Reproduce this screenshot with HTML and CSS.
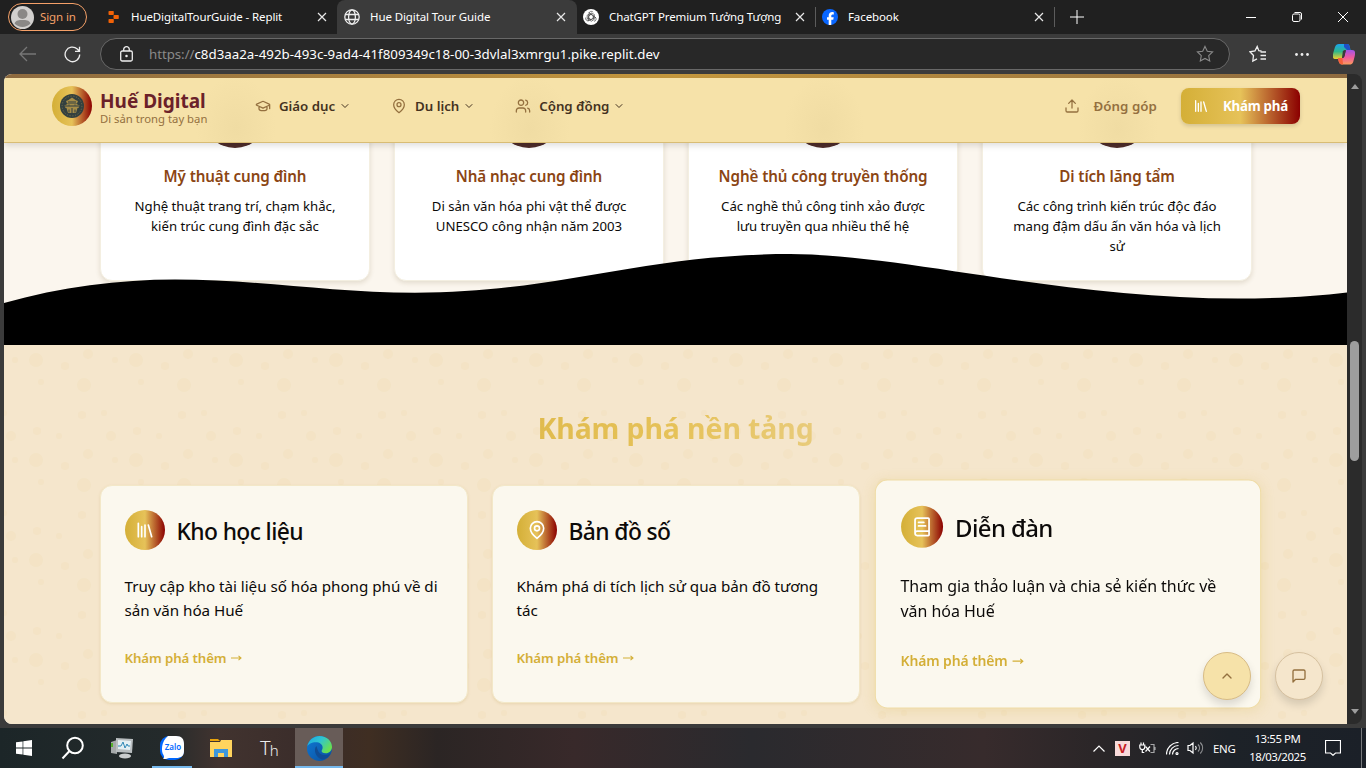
FILE: index.html
```html
<!DOCTYPE html>
<html lang="vi">
<head>
<meta charset="utf-8">
<title>Hue Digital Tour Guide</title>
<link rel="stylesheet" href="styles.css">
</head>
<body>
<svg class="defs" aria-hidden="true">
  <defs>
    <symbol id="x" viewBox="0 0 10 10"><path d="M1 1l8 8M9 1l-8 8"/></symbol>
    <symbol id="chev" viewBox="0 0 24 24"><path d="m6 9 6 6 6-6"/></symbol>
    <symbol id="lib" viewBox="0 0 24 24"><path d="m16 6 4 14M12 6v14M8 8v12M4 4v16"/></symbol>
    <symbol id="pin" viewBox="0 0 24 24"><path d="M20 10c0 6-8 12-8 12s-8-6-8-12a8 8 0 0 1 16 0Z"/><circle cx="12" cy="10" r="3"/></symbol>
    <symbol id="star" viewBox="0 0 18 18"><path d="m9 1.4 2.3 4.9 5.3.7-3.9 3.7 1 5.3L9 13.4 4.300 16l1-5.300L1.400 7l5.300-.7Z"/></symbol>
    <linearGradient id="edgeA" x1="0" y1="0" x2="1" y2="1"><stop offset="0" stop-color="#0f78d4"/><stop offset="1" stop-color="#0a4f9e"/></linearGradient>
    <linearGradient id="edgeB" x1="0" y1="0" x2="1" y2=".6"><stop offset="0" stop-color="#1ba7e0"/><stop offset=".5" stop-color="#2fc4d2"/><stop offset="1" stop-color="#6ae04f"/></linearGradient>
    <linearGradient id="copA" x1="0" y1="0" x2="0" y2="1"><stop offset="0" stop-color="#1ba4f0"/><stop offset=".5" stop-color="#2fb78a"/><stop offset="1" stop-color="#f2cf2c"/></linearGradient>
    <linearGradient id="copB" x1="0" y1="0" x2="0" y2="1"><stop offset="0" stop-color="#a155e8"/><stop offset=".5" stop-color="#ef5aa0"/><stop offset="1" stop-color="#fb9a5a"/></linearGradient>
  </defs>
</svg>
<div class="screen">
  <div class="tabs">
    <div class="signin"><svg width="23" height="23" viewBox="0 0 23 23"><circle cx="11.500" cy="11.500" r="11.500" fill="#d2d0ce"/><circle cx="11.500" cy="8" r="5" fill="#8a8886"/><path d="M3.500 17.500C5 14 8 14 11.500 14s6.500 0 8 3.500a11 11 0 0 1-16 0Z" fill="#8a8886"/></svg><span>Sign in</span></div>
    <div class="tab tab-1"><svg class="fav" viewBox="0 0 16 16" fill="#f26207"><rect x="2.500" y="2" width="5.300" height="4" rx=".8"/><rect x="7.500" y="6" width="5.300" height="4" rx=".8"/><rect x="2.500" y="10" width="5.300" height="4" rx=".8"/></svg><span>HueDigitalTourGuide - Replit</span><svg class="close"><use href="#x"/></svg></div>
    <div class="tab tab-2"><svg class="fav" viewBox="0 0 16 16" fill="none" stroke="#eee" stroke-width="1.300"><circle cx="8" cy="8" r="7.200"/><ellipse cx="8" cy="8" rx="3.400" ry="7.200"/><path d="M1.500 5.500h13M1.500 10.500h13"/></svg><span>Hue Digital Tour Guide</span><svg class="close"><use href="#x"/></svg></div>
    <div class="tab tab-3"><svg class="fav" viewBox="0 0 16 16" fill="none" stroke="#444" stroke-width=".65"><circle cx="8" cy="8" r="8" fill="#fff" stroke="none"/><g id="knot"><path d="M6 7V4.500a2.300 2.300 0 0 1 4.200-1.200M6 9.500l2 1.200 3.400-2V5.500L8 3.800"/><path d="M8 5.300 10.300 6.700V10L13 8.200"/></g><use href="#knot" transform="rotate(120 8 8)"/><use href="#knot" transform="rotate(240 8 8)"/></svg><span>ChatGPT Premium Tưởng Tượng</span><svg class="close"><use href="#x"/></svg></div>
    <div class="tab tab-4"><svg class="fav" viewBox="0 0 16 16"><circle cx="8" cy="8" r="8" fill="#0866ff"/><path d="M6.700 16v-5.300H5V8.200h1.700V7c0-2.700 1.200-3.900 3.800-3.900l1.300.1v2.300h-.8C9.700 5.500 9.300 6 9.300 7v1.200h2.400l-.4 2.500h-2V16Z" fill="#fff"/></svg><span>Facebook</span><svg class="close"><use href="#x"/></svg></div>
    <svg class="plus" viewBox="0 0 14 14"><path d="M7 0v14M0 7h14"/></svg>
    <div class="win">
      <svg width="10" height="10"><path d="M0 5.500h10"/></svg>
      <svg width="10" height="10" viewBox="0 0 10 10"><rect x=".5" y="2" width="7.500" height="7.500" rx="1.500"/><path d="M2.500.5H8A1.500 1.500 0 0 1 9.500 2v5.500"/></svg>
      <svg width="10" height="10"><path d="M0 0l10 10M10 0L0 10"/></svg>
    </div>
  </div>
  <div class="toolbar">
    <svg class="back" viewBox="0 0 17 16"><path d="M8 1 1 8l7 7M1 8h16"/></svg>
    <svg class="reload" viewBox="0 0 17 17"><path d="M15.700 8.500A7.300 7.300 0 1 1 13.300 3L15.200 5M15.500.8V5.300H11"/></svg>
    <div class="omni">
      <svg class="lock" viewBox="0 0 13 16"><rect x=".7" y="5" width="11.600" height="10" rx="1.500"/><path d="M3.700 5V3.500a2.800 2.800 0 0 1 5.600 0V5"/><circle cx="6.500" cy="10" r=".6" fill="#eee"/></svg>
      <span class="url"><i>https://</i>c8d3aa2a-492b-493c-9ad4-41f809349c18-00-3dvlal3xmrgu1.pike.replit.dev</span>
      <svg class="star" viewBox="0 0 18 18"><use href="#star"/></svg>
    </div>
    <svg class="favs" viewBox="0 0 18 18"><path d="M12.500 6 9.800 5.700 8.200 1.500 6 5.900 1 6.800l3.500 3.700L3.800 16 8 13.800M11.500 7H17M11.500 10.500H17M11.500 14H17"/></svg>
    <svg class="dots" viewBox="0 0 14 3"><circle cx="1.500" cy="1.500" r="1.400"/><circle cx="7" cy="1.500" r="1.400"/><circle cx="12.500" cy="1.500" r="1.400"/></svg>
    <svg class="copilot" viewBox="0 0 22 21"><path d="M10 0h4c2 0 2.500 1.500 3 4l.5 2H14c-2 0-3 1-3.500 3L9 15H3c-4 0-3.500-3-2.500-7L2 3C2.700 1 4 0 6 0Z" fill="url(#copA)"/><path d="M11 0h3c2 0 2.500 1.500 3 4l.5 2H14l-3-3Z" fill="#1f50c8"/><path d="M13 6h6c3.500 0 3.500 3 2.500 7l-1.300 5c-.7 2-2 2.500-4 2.500H9c-2 0-3-1.500-3.500-4L5 14h4c2 0 2.500-1.500 3-4Z" fill="url(#copB)"/><path d="M5 14h4.500l.5 6.400H9C6.500 20.400 5.500 18 5 14Z" fill="#f5603a"/><path d="M9.800 7.500c.6-1.200 1.500-1.500 3-1.500L11.500 12c-.4 1.500-1 2-2.500 2Z" fill="#3b3b3b"/></svg>
  </div>
  <div class="frame">
    <main class="page">
      <div class="strip"></div>
      <header class="header">
        <div class="brand">
          <div class="logo"><svg width="24" height="24" viewBox="0 0 24 24"><circle cx="12" cy="12" r="12" fill="#33403f"/><circle cx="12" cy="12" r="9.900" fill="none" stroke="#6f6c4a" stroke-width="1" stroke-dasharray="1.200 1.600"/><path d="M6 7l2.500-1L12 3.500l3.500 2.500L18 7l-1 2.500H7ZM4.500 11.500l3-1.500h9l3 1.500-1 2.500h-13ZM6.500 14h11l-1.500 5H8Z" fill="#a58c47"/><path d="M9 15.500v3M12 14v5M15 15.500v3M5 12h14M8 8h8M9 10.500v1M15 10.500v1" stroke="#2f3d43" stroke-width="1"/></svg></div>
          <div><div class="brand-name">Huế Digital</div><div class="brand-sub">Di sản trong tay bạn</div></div>
        </div>
        <nav class="nav">
          <a><svg class="ic" viewBox="0 0 24 24"><path d="M21.420 10.922a1 1 0 0 0-.019-1.838L12.830 5.180a2 2 0 0 0-1.660 0L2.600 9.080a1 1 0 0 0 0 1.832l8.570 3.908a2 2 0 0 0 1.660 0zM22 10v6M6 12.500V16a6 3 0 0 0 12 0v-3.500"/></svg><span>Giáo dục</span><svg class="chev"><use href="#chev"/></svg></a>
          <a><svg class="ic"><use href="#pin"/></svg><span>Du lịch</span><svg class="chev"><use href="#chev"/></svg></a>
          <a><svg class="ic" viewBox="0 0 24 24"><path d="M16 21v-2a4 4 0 0 0-4-4H6a4 4 0 0 0-4 4v2M22 21v-2a4 4 0 0 0-3-3.870M16 3.130a4 4 0 0 1 0 7.750"/><circle cx="9" cy="7" r="4"/></svg><span>Cộng đồng</span><svg class="chev"><use href="#chev"/></svg></a>
        </nav>
        <a class="give"><svg class="ic" viewBox="0 0 24 24"><path d="M21 15v4a2 2 0 0 1-2 2H5a2 2 0 0 1-2-2v-4M17 8l-5-5-5 5M12 3v12"/></svg><span>Đóng góp</span></a>
        <a class="cta"><svg><use href="#lib"/></svg><span>Khám phá</span></a>
      </header>
      <section class="features">
        <div class="grid4">
          <article class="fcard"><div class="disc"></div><h3>Mỹ thuật cung đình</h3><p>Nghệ thuật trang trí, chạm khắc,<br>kiến trúc cung đình đặc sắc</p></article>
          <article class="fcard"><div class="disc"></div><h3>Nhã nhạc cung đình</h3><p>Di sản văn hóa phi vật thể được<br>UNESCO công nhận năm 2003</p></article>
          <article class="fcard"><div class="disc"></div><h3>Nghề thủ công truyền thống</h3><p>Các nghề thủ công tinh xảo được<br>lưu truyền qua nhiều thế hệ</p></article>
          <article class="fcard"><div class="disc"></div><h3>Di tích lăng tẩm</h3><p>Các công trình kiến trúc độc đáo<br>mang đậm dấu ấn văn hóa và lịch<br>sử</p></article>
        </div>
        <svg class="wave" viewBox="4 245 1343 100" preserveAspectRatio="none"><path d="M4 303C60 287 120 279.500 175 279.500C260 279.500 330 292.700 415 292.700C560 292.700 640 254 790 254C900 254 1060 298.500 1238 298.500C1275 298.500 1315 296.500 1347 292.500V345H4Z"/></svg>
      </section>
      <section class="platform">
        <svg class="bubbles"><defs><pattern id="bub" width="100" height="100" patternUnits="userSpaceOnUse" x="21" y="4"><g fill="#d4af37" fill-opacity=".05"><circle cx="11" cy="11" r="7"/><circle cx="59" cy="36" r="7"/><circle cx="16" cy="33" r="3"/><circle cx="79" cy="64" r="3"/><circle cx="34" cy="87" r="3"/><circle cx="90" cy="11" r="3"/><circle cx="12" cy="82" r="4"/><circle cx="40" cy="17" r="4"/><circle cx="63" cy="5" r="5"/><circle cx="57" cy="66" r="4"/><circle cx="86" cy="87" r="5"/></g></pattern></defs><rect width="100%" height="100%" fill="url(#bub)"/></svg>
        <h2><span>Khám phá nền tảng</span></h2>
        <div class="grid3">
          <article class="pcard"><div class="phead"><div class="pic"><svg><use href="#lib"/></svg></div><h3>Kho học liệu</h3></div><p>Truy cập kho tài liệu số hóa phong phú về di<br>sản văn hóa Huế</p><a>Khám phá thêm <svg class="arr" viewBox="0 0 11 6"><path d="M0 3h10M7.500.8 10 3 7.500 5.200"/></svg></a></article>
          <article class="pcard"><div class="phead"><div class="pic"><svg><use href="#pin"/></svg></div><h3>Bản đồ số</h3></div><p>Khám phá di tích lịch sử qua bản đồ tương<br>tác</p><a>Khám phá thêm <svg class="arr" viewBox="0 0 11 6"><path d="M0 3h10M7.500.8 10 3 7.500 5.200"/></svg></a></article>
          <article class="pcard hover"><div class="phead"><div class="pic"><svg viewBox="0 0 24 24"><path d="M4 19.500v-15A2.500 2.500 0 0 1 6.500 2H19a1 1 0 0 1 1 1v18a1 1 0 0 1-1 1H6.500a1 1 0 0 1 0-5H20M8 11h8M8 7h6"/></svg></div><h3>Diễn đàn</h3></div><p>Tham gia thảo luận và chia sẻ kiến thức về<br>văn hóa Huế</p><a>Khám phá thêm <svg class="arr" viewBox="0 0 11 6"><path d="M0 3h10M7.500.8 10 3 7.500 5.200"/></svg></a></article>
        </div>
      </section>
      <div class="fabs">
        <div class="fab gold"><svg viewBox="0 0 24 24"><path d="m6 15 6-6 6 6"/></svg></div>
        <div class="fab"><svg viewBox="0 0 24 24"><path d="M21 15a2 2 0 0 1-2 2H7l-4 4V5a2 2 0 0 1 2-2h14a2 2 0 0 1 2 2z"/></svg></div>
      </div>
    </main>
    <div class="scroll"><i class="up"></i><i class="thumb"></i><i class="down"></i></div>
  </div>
  <div class="taskbar">
    <div class="t"><svg width="16" height="16" viewBox="0 0 16 16" fill="#fff"><path d="M0 2.300 6.600 1.400V7.600H0ZM7.300 1.300 16 0V7.600H7.300ZM0 8.400H6.600V14.600L0 13.700ZM7.300 8.400H16V16L7.300 14.700Z"/></svg></div>
    <div class="t"><svg width="24" height="24" viewBox="0 0 24 24" fill="none" stroke="#fff" stroke-width="2"><circle cx="14" cy="9.500" r="7.800"/><path d="M8.500 15 1.500 22.500"/></svg></div>
    <div class="t"><svg width="24" height="22" viewBox="0 0 24 22"><path d="M1 5l6-2v14l-6-1Z" fill="#a5a9aa"/><rect x="1" y="6" width="2" height="4" fill="#55b12c"/><path d="M6 1l17 1-1 14-16-1Z" fill="#b9bec0"/><path d="M8 3l13 1-1 9-12-1Z" fill="#e4eff3"/><path d="M8 9h3l2-4 2 6 2-4 1 2h2" fill="none" stroke="#2f88b6"/><ellipse cx="15" cy="19" rx="6" ry="2.500" fill="#c9cccd"/></svg></div>
    <div class="t run"><svg width="24" height="24" viewBox="0 0 24 24"><rect width="24" height="24" rx="9" fill="#0068ff"/><path d="M8 0h8c6 0 8 3 8 8v7c0 5-3 7-8 7H9c-2 1-4 1-6 1 1-1 1.500-2 .5-4C1 16 1 5 8 0Z" fill="#fff"/><text x="13" y="14" text-anchor="middle" class="zalo">Zalo</text></svg></div>
    <div class="t"><svg width="22" height="18" viewBox="0 0 22 18"><path d="M0 0h8l2 2H0Z" fill="#e8a30c"/><path d="M0 3h10l1-2h11v17H0Z" fill="#ffd45e"/><path d="M4 18V10h14v8h-4v-4H8v4Z" fill="#3d97dc"/></svg></div>
    <div class="t"><svg width="28" height="30" viewBox="0 0 28 30"><text x="4" y="22" class="th">T<tspan class="th-small" dy="1">h</tspan></text></svg></div>
    <div class="t run wide"><svg width="25" height="25" viewBox="0 0 24 24"><circle cx="12" cy="12" r="12" fill="url(#edgeA)"/><path d="M.2 10C1.500 4 6.500 0 12 0c7 0 12 5 12 10.500 0 3.500-2.800 6-6 6-3 0-4-1-4-2s1-1.500 1-3.500c0-3-3-5-6.500-5C4.500 6 1 8 .2 10Z" fill="url(#edgeB)"/><path d="M9 9.500c-3 3.500-1 11 5.500 13 4-.5 6.500-3 8-5.500-3 1.500-7 2-10-.3-2-1.700-2.500-5-3.500-7.200Z" fill="#104c94"/></svg></div>
    <div class="tray">
      <svg class="s1" width="12" height="7" viewBox="0 0 12 7"><path d="M.5 6.500 6 1l5.500 5.500"/></svg>
      <div class="vk">V</div>
      <svg class="s2" width="17" height="12" viewBox="0 0 17 12"><path d="M2 .5v2M4.500.5v2M.8 3h5v2a2.500 2.500 0 0 1-5 0ZM3.300 7.500v3h2"/><path d="M11.500 2.500H15v8h-3.500M16 5v3" opacity=".6"/><path d="M6.500 4.500l4.500 5M11 4.500l-4.500 5"/></svg>
      <svg class="s3" width="13" height="13" viewBox="0 0 13 13"><path d="M.5 12.500A12 12 0 0 1 12.500.5M3.500 12.500a9 9 0 0 1 9-9M6.500 12.500a6 6 0 0 1 6-6"/><circle cx="11" cy="11.500" r="1"/></svg>
      <svg class="s4" width="17" height="14" viewBox="0 0 17 14"><path d="M1 4.500h2L6 2v10L3 9.500H1ZM8.500 5c1 1.300 1 2.700 0 4"/><path d="M11 3.500c2 2 2 5 0 7M13.300 1.500c3 3.300 3 7.700 0 11" opacity=".5"/></svg>
      <span class="eng">ENG</span>
      <div class="clock"><span>13:55 PM</span><span>18/03/2025</span></div>
      <svg class="s5" width="16" height="16" viewBox="0 0 16 16"><path d="M.5.5h15v12.500H10.500L8 15.300 5.500 13H.5Z"/></svg>
      <i class="peek"></i>
    </div>
  </div>
</div>
</body>
</html>
```
FILE: styles.css
```css
* { box-sizing: border-box; }
body { margin: 0; font-family: "Noto Sans", sans-serif; overflow: hidden; }
h2, h3, p { margin: 0; }
svg { display: block; flex: none; }
.defs { position: absolute; width: 0; height: 0; }
.screen { width: 1366px; height: 768px; display: flex; flex-direction: column; background: #3b3b3b; }

/* browser tabs */
.tabs { height: 34px; display: flex; align-items: center; background: #202020; color: #fff; font-size: 11.500px; letter-spacing: -.1px; }
.tabs span { padding-bottom: 2px; }
.signin { width: 79px; height: 28px; margin-left: 8px; padding-left: 2px; border: 1px solid #f5a068; border-radius: 14px; display: flex; align-items: center; gap: 6px; color: #f5a068; }
.tab { height: 34px; display: flex; align-items: center; white-space: nowrap; }
.tab .close { margin-left: auto; }
.fav { width: 16px; height: 16px; }
.close { width: 10px; height: 10px; stroke: #e8e8e8; stroke-width: 1.200; fill: none; }
.tab-1 { width: 250px; padding: 0 10px 0 19px; border-radius: 0 0 8px 0; }
.tab-1 .fav { margin-right: 9px; }
.tab-2 { width: 240px; padding: 0 11px 0 7px; border-radius: 8px 8px 0 0; background: #3b3b3b; }
.tab-2 .fav, .tab-3 .fav { margin-right: 10px; }
.tab-3 { width: 238px; padding: 0 10px 0 6px; }
.tab-4 .fav { margin-right: 10px; }
.tab-4 { width: 240px; height: 20px; padding: 0 10px 0 6px; border: solid #5c5c5c; border-width: 0 1px; }
.plus { width: 14px; height: 14px; margin-left: 15px; stroke: #fff; stroke-width: 1; }
.win { margin-left: auto; margin-right: 18px; display: flex; gap: 36px; fill: none; }
.win svg { stroke: #fff; stroke-width: 1; }

/* toolbar */
.toolbar { height: 40px; display: flex; align-items: center; background: #3b3b3b; fill: none; }
.toolbar > svg, .omni > svg { fill: none; stroke: #eee; stroke-width: 1.300; }
.toolbar .back { width: 17px; height: 16px; margin-left: 19px; stroke: #777; }
.toolbar .reload { width: 17px; height: 17px; margin-left: 28px; }
.omni { width: 1130px; height: 32px; margin-left: 19px; padding: 0 15px 0 19px; border: 1px solid #686868; border-radius: 16px; background: #282828; display: flex; align-items: center; }
.lock { width: 13px; height: 16px; }
.url { margin-left: 16px; color: #fff; font-size: 13.300px; letter-spacing: .02px; white-space: nowrap; }
.url i { font-style: normal; color: #8a8a8a; letter-spacing: -.05px; }
.omni .star { width: 18px; height: 18px; margin-left: auto; stroke: #8a8a8a; stroke-width: 1.100; }
.toolbar .favs { width: 18px; height: 18px; margin-left: 19px; }
.toolbar .dots { width: 14px; height: 3px; margin-left: 28px; fill: #eee; stroke: none; }
.toolbar .copilot { width: 22px; height: 21px; margin-left: 24px; stroke: none; }

/* page frame */
.frame { height: 654px; padding: 0 4px 4px; display: flex; }
.page { position: relative; width: 1343px; height: 650px; overflow: hidden; border-radius: 8px 0 0 8px; background: #fbf6ee; }
.strip { height: 4px; background: linear-gradient(90deg, #8f6b40, #c5983d 50%, #8f6b40); }
.header { position: relative; z-index: 2; height: 65px; padding: 0 47px 8px 48px; display: flex; align-items: center; border-bottom: 1px solid #d8bc75; box-shadow: 0 3px 6px rgba(0,0,0,.12);
  background: radial-gradient(ellipse 40px 52px at 232px 50px, #f0dca3, #f0dca300), radial-gradient(ellipse 40px 52px at 526px 50px, #f0dca3, #f0dca300), radial-gradient(ellipse 40px 52px at 820px 50px, #f0dca3, #f0dca300), radial-gradient(ellipse 40px 52px at 1114px 50px, #f0dca3, #f0dca300), #f6e2a9; }
.brand { width: 203px; display: flex; align-items: center; gap: 8px; white-space: nowrap; }
.logo, .pic, .cta { background: linear-gradient(90deg, #d4af37, #e6c259 50%, #8b0000); }
.logo { width: 40px; height: 40px; border-radius: 50%; display: grid; place-items: center; flex: none; }
.brand-name { color: #6b2129; font-size: 19px; font-weight: 700; line-height: 20px; padding-top: 4px; }
.brand-sub { color: #94703f; font-size: 11.300px; line-height: 15px; }
.nav { display: flex; gap: 40px; }
.nav a, .give { display: flex; align-items: center; white-space: nowrap; color: #44321f; font-size: 13.300px; font-weight: 600; letter-spacing: -.03px; }
.ic { width: 16px; height: 16px; fill: none; stroke: #94703f; stroke-width: 1.900; stroke-linecap: round; stroke-linejoin: round; margin-right: 8px; }
.chev { width: 12px; height: 12px; margin-left: 4px; fill: none; stroke: #44321f; stroke-width: 2; stroke-linecap: round; stroke-linejoin: round; }
.give { margin-left: auto; color: #94703f; letter-spacing: .05px; }
.give .ic { margin-right: 14px; }
.cta { width: 119px; height: 36px; margin-left: 24px; padding-left: 12px; border-radius: 8px; display: flex; align-items: center; gap: 14px; color: #fff; font-size: 13.300px; font-weight: 700; letter-spacing: -.25px; white-space: nowrap; box-shadow: 0 2px 4px rgba(0,0,0,.15); }
.cta svg, .pic svg { width: 16px; height: 16px; fill: none; stroke: #fff; stroke-width: 2; stroke-linecap: round; stroke-linejoin: round; }

/* features */
.features { position: relative; height: 202px; overflow: hidden; background: #fbf6ee; }
.grid4 { margin: -84px 95px 0 96px; display: grid; grid-template-columns: repeat(4, 270px); gap: 24px; }
.fcard { height: 222px; padding: 24px 0; border: 1px solid #f4efe1; border-radius: 12px; background: #fff; text-align: center; box-shadow: 0 2px 5px rgba(90,70,20,.15); }
.disc { width: 64px; height: 64px; margin: 0 auto 16px; border-radius: 50%; background: #4e2c2a; }
.fcard h3 { color: #8b4513; font-size: 15.200px; font-weight: 600; line-height: 24px; letter-spacing: -.1px; margin-bottom: 8px; }
.fcard p { color: #0c0a09; font-size: 13.200px; line-height: 20px; letter-spacing: -.02px; white-space: nowrap; }
.wave { position: absolute; left: 0; bottom: 0; width: 1343px; height: 100px; }

/* platform */
.platform { position: relative; height: 379px; padding: 63px 96px 0 96px; background: #f5e6cc; }
.bubbles { position: absolute; inset: 0; width: 100%; height: 100%; }
.platform h2 { position: relative; height: 36px; margin-bottom: 41px; text-align: center; font-size: 28.500px; line-height: 40px; font-weight: 700; letter-spacing: -.12px; white-space: nowrap; }
.platform h2 span { color: transparent; background: linear-gradient(90deg, #e0bb4e, #e6c259 50%, #e8cb7b); background-clip: text; -webkit-background-clip: text; }
.grid3 { position: relative; display: grid; grid-template-columns: repeat(3, 368px); gap: 24px; }
.pcard { height: 218px; padding: 24px 24px 24px 23.500px; border: 1px solid #f3e8c8; border-radius: 12px; background: #fbf8ee; box-shadow: 0 1px 3px rgba(180,140,50,.18); white-space: nowrap; }
.pcard.hover { transform: scale(1.05); border-color: #efdca6; box-shadow: 0 2px 12px rgba(212,175,55,.2); }
.phead { display: flex; align-items: center; gap: 12px; height: 40px; margin-bottom: 24px; }
.pic { width: 40px; height: 40px; border-radius: 50%; display: grid; place-items: center; }
.pic svg { width: 20px; height: 20px; }
.pcard h3 { font-size: 22.800px; font-weight: 550; color: #0c0a09; line-height: 32px; letter-spacing: -.6px; padding-top: 4px; }
.pcard p { font-size: 15.200px; line-height: 24px; letter-spacing: -.02px; color: #0c0a09; margin-bottom: 26px; }
.pcard a { display: flex; align-items: center; gap: 4px; font-size: 13.300px; font-weight: 600; line-height: 20px; letter-spacing: -.12px; color: #d4af37; }
.arr { width: 11px; height: 6px; fill: none; stroke: #d4af37; stroke-width: 1.100; }
.fabs { position: absolute; right: 24px; bottom: 24px; display: flex; gap: 24px; z-index: 3; }
.fab { width: 48px; height: 48px; border-radius: 50%; border: 1px solid #d6c1a0; background: #f5e6cc; display: grid; place-items: center; box-shadow: 0 5px 9px rgba(0,0,0,.13); }
.fab.gold { background: #f6e2a9; border-color: #d8bc85; }
.fab svg { width: 16px; height: 16px; fill: none; stroke: #94703f; stroke-width: 2; stroke-linecap: round; stroke-linejoin: round; }

.scroll { width: 15px; height: 650px; display: flex; flex-direction: column; align-items: center; background: #2b2b2b; border-radius: 0 8px 8px 0; }
.up, .down { width: 0; height: 0; border: solid transparent; border-width: 0 4.500px 5px; border-bottom-color: #9d9d9d; margin-top: 10px; }
.thumb { width: 9px; height: 120px; margin-top: 252px; border-radius: 5px; background: #9d9d9d; }
.down { border-width: 5px 4.500px 0; border-top-color: #9d9d9d; margin-top: 248px; }

/* taskbar */
.taskbar { height: 40px; display: flex; background: linear-gradient(90deg, #1c2628, #242a2b 12%, #41332f 16%, #3a2c2a 23%, #3f2e22 27%, #2b2524 32%, #38292a 42%, #2a2a2e 55%, #372b2c 72%, #2b2628 80%, #1d2228 90%, #1b2028); color: #fff; }
.t { width: 48px; display: grid; place-items: center; margin-right: 1.200px; }
.t.run { background: linear-gradient(#76b9ed, #76b9ed) bottom / 40px 2px no-repeat; }
.t.wide { background: linear-gradient(#76b9ed, #76b9ed) bottom / 48px 2px no-repeat, #685c58; }
.zalo { font: 600 8px "Noto Sans", sans-serif; fill: #0068ff; }
.th { font: 300 20px "Noto Sans", sans-serif; fill: #eee; letter-spacing: -1px; }
.th-small { font-size: 15px; }
.tray { margin-left: auto; display: flex; align-items: center; font-size: 11.400px; }
.tray svg { fill: none; stroke: #fff; stroke-width: 1.200; }
.vk { width: 15px; height: 15px; margin-left: 10px; background: #f8dada; color: #c71d24; font-weight: 700; font-size: 13px; line-height: 15px; text-align: center; }
.tray .s2 { margin-left: 9px; }
.tray .s3 { margin-left: 10px; }
.tray .s4 { margin-left: 8px; }
.eng { margin-left: 9px; width: 24px; letter-spacing: -.3px; }
.clock { margin-left: 11px; margin-right: 1px; padding-bottom: 1px; width: 59px; display: flex; flex-direction: column; align-items: center; line-height: 18px; letter-spacing: -.4px; white-space: nowrap; }
.tray .s5 { margin-left: 17px; }
.peek { width: 1px; height: 40px; background: #77797c; margin: 0 4px 0 20px; }
```
